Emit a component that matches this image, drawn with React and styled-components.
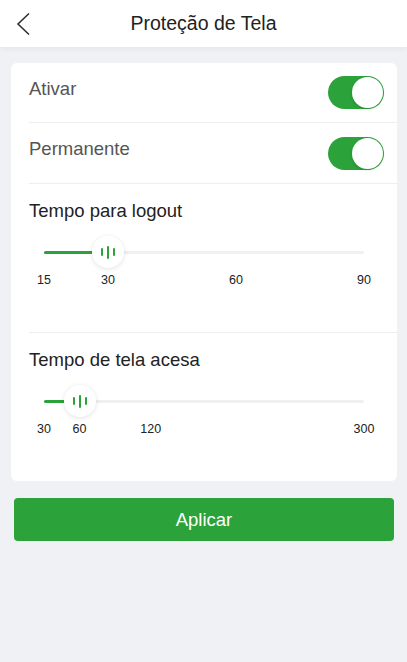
import React from "react";
import styled, { createGlobalStyle } from "styled-components";

const GREEN = "#2ba23a";

const Global = createGlobalStyle`
  html, body { margin: 0; padding: 0; background: #f0f1f5; }
  body { font-family: "Liberation Sans", Arial, sans-serif; }
  * { box-sizing: border-box; }
`;

const Page = styled.div`
  min-height: 662px;
  background: #f0f1f5;
  display: flex;
  flex-direction: column;
`;

const Header = styled.header`
  height: 47px;
  background: #fff;
  box-shadow: 0 2px 6px rgba(0, 0, 0, 0.05);
  display: grid;
  grid-template-columns: 48px 1fr 48px;
  align-items: center;
`;

const BackButton = styled.button`
  border: 0;
  background: none;
  padding: 0 0 0 16px;
  height: 47px;
  display: flex;
  align-items: center;
`;

const Title = styled.h1`
  margin: 0;
  text-align: center;
  font-size: 19.5px;
  font-weight: 400;
  color: #222;
`;

const Card = styled.section`
  margin: 16px 10px 0 11px;
  background: #fff;
  border-radius: 6px;
  overflow: hidden;
`;

const Row = styled.div`
  margin-left: 18px;
  padding-right: 13px;
  height: ${(p) => p.$h}px;
  border-bottom: 1px solid #eeeeee;
  display: flex;
  align-items: center;
  justify-content: space-between;
`;

const RowLabel = styled.span`
  font-size: 18.5px;
  color: #555;
  margin-top: ${(p) => p.$dy || 0}px;
`;

const Toggle = styled.div`
  width: 56px;
  height: 33px;
  border-radius: 17px;
  background: ${GREEN};
  display: flex;
  align-items: center;
  justify-content: flex-end;
  padding-right: 1px;
`;

const Knob = styled.div`
  width: 31px;
  height: 31px;
  border-radius: 50%;
  background: #fff;
  box-shadow: 0 1px 3px rgba(0, 0, 0, 0.15);
`;

const Section = styled.div`
  margin-left: 18px;
  padding: 17px 0 45px;
  border-bottom: ${(p) => (p.$last ? "0" : "1px solid #eeeeee")};
`;

const SectionTitle = styled.h2`
  margin: 0;
  font-size: 18.5px;
  line-height: 20px;
  font-weight: 400;
  color: #222;
`;

const SliderWrap = styled.div`
  margin: 15px 33px 0 15px;
`;

const Track = styled.div`
  position: relative;
  height: 32px;
`;

const Rail = styled.div`
  position: absolute;
  left: 0;
  right: 0;
  top: 14.5px;
  height: 3px;
  border-radius: 2px;
  background: #f0f0f0;
`;

const Fill = styled.div`
  position: absolute;
  left: 0;
  top: 14.5px;
  height: 3px;
  border-radius: 2px;
  background: ${GREEN};
`;

const Thumb = styled.div`
  position: absolute;
  top: 0;
  width: 32px;
  height: 32px;
  margin-left: -16px;
  border-radius: 50%;
  background: #fff;
  box-shadow: 0 1px 5px rgba(0, 0, 0, 0.12);
  display: flex;
  align-items: center;
  justify-content: center;
  gap: 4px;
`;

const Bar = styled.span`
  width: 2px;
  height: ${(p) => p.$h}px;
  border-radius: 1px;
  background: ${GREEN};
`;

const Marks = styled.div`
  position: relative;
  height: 14px;
  margin-top: 5px;
`;

const Mark = styled.span`
  position: absolute;
  top: 0;
  transform: translateX(-50%);
  font-size: 12.5px;
  line-height: 14px;
  color: #222;
`;

const ApplyButton = styled.button`
  margin: 17px 13px 0 14px;
  height: 43px;
  border: 0;
  border-radius: 4px;
  background: ${GREEN};
  color: #fff;
  font-family: inherit;
  font-size: 18.5px;
`;

function Slider({ min, max, value, marks }) {
  const pct = (v) => ((v - min) / (max - min)) * 100;
  return (
    <SliderWrap>
      <Track>
        <Rail />
        <Fill style={{ width: `${pct(value)}%` }} />
        <Thumb style={{ left: `${pct(value)}%` }}>
          <Bar $h={8} />
          <Bar $h={13} />
          <Bar $h={8} />
        </Thumb>
      </Track>
      <Marks>
        {marks.map((m) => (
          <Mark key={m} style={{ left: `${pct(m)}%` }}>
            {m}
          </Mark>
        ))}
      </Marks>
    </SliderWrap>
  );
}

export default function App() {
  return (
    <Page>
      <Global />
      <Header>
        <BackButton aria-label="Voltar">
          <svg width="14" height="24" viewBox="0 0 14 24">
            <polyline
              points="13,1.5 2,12 13,22.5"
              fill="none"
              stroke="#333"
              strokeWidth="1.6"
            />
          </svg>
        </BackButton>
        <Title>Proteção de Tela</Title>
        <span />
      </Header>
      <Card>
        <Row $h={60}>
          <RowLabel $dy={-8}>Ativar</RowLabel>
          <Toggle>
            <Knob />
          </Toggle>
        </Row>
        <Row $h={61}>
          <RowLabel $dy={-8}>Permanente</RowLabel>
          <Toggle>
            <Knob />
          </Toggle>
        </Row>
        <Section>
          <SectionTitle>Tempo para logout</SectionTitle>
          <Slider min={15} max={90} value={30} marks={[15, 30, 60, 90]} />
        </Section>
        <Section $last>
          <SectionTitle>Tempo de tela acesa</SectionTitle>
          <Slider min={30} max={300} value={60} marks={[30, 60, 120, 300]} />
        </Section>
      </Card>
      <ApplyButton>Aplicar</ApplyButton>
    </Page>
  );
}
